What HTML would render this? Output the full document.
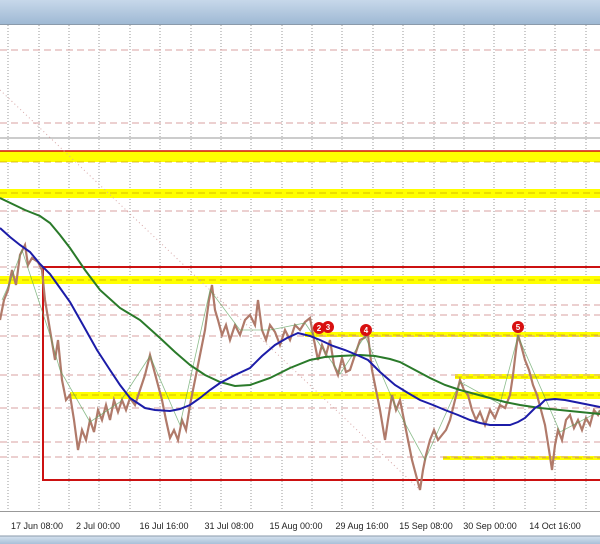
<!DOCTYPE html>
<html><head><style>
html,body{margin:0;padding:0;width:600px;height:544px;overflow:hidden;background:#fff;font-family:"Liberation Sans",sans-serif}
</style></head><body>
<svg width="600" height="544" xmlns="http://www.w3.org/2000/svg">
<defs>
<linearGradient id="tb" x1="0" y1="0" x2="0" y2="1"><stop offset="0" stop-color="#c7d8ea"/><stop offset="1" stop-color="#9fb9d4"/></linearGradient>
<linearGradient id="bb" x1="0" y1="0" x2="0" y2="1"><stop offset="0" stop-color="#d7e3ef"/><stop offset="1" stop-color="#a8c0d8"/></linearGradient>
</defs>
<rect x="0" y="0" width="600" height="24" fill="url(#tb)"/>
<line x1="0" y1="24.5" x2="600" y2="24.5" stroke="#8a9aab"/>
<g stroke="#9a9a9a" stroke-dasharray="1,2" stroke-width="1">
<line x1="8" y1="25" x2="8" y2="512"/><line x1="39" y1="25" x2="39" y2="512"/><line x1="69" y1="25" x2="69" y2="512"/><line x1="99" y1="25" x2="99" y2="512"/><line x1="130" y1="25" x2="130" y2="512"/><line x1="160" y1="25" x2="160" y2="512"/><line x1="191" y1="25" x2="191" y2="512"/><line x1="221" y1="25" x2="221" y2="512"/><line x1="251" y1="25" x2="251" y2="512"/><line x1="282" y1="25" x2="282" y2="512"/><line x1="312" y1="25" x2="312" y2="512"/><line x1="342" y1="25" x2="342" y2="512"/><line x1="373" y1="25" x2="373" y2="512"/><line x1="403" y1="25" x2="403" y2="512"/><line x1="434" y1="25" x2="434" y2="512"/><line x1="464" y1="25" x2="464" y2="512"/><line x1="494" y1="25" x2="494" y2="512"/><line x1="525" y1="25" x2="525" y2="512"/><line x1="555" y1="25" x2="555" y2="512"/><line x1="586" y1="25" x2="586" y2="512"/>
</g>
<g fill="#ffff00">
<rect x="0" y="151" width="600" height="11"/>
<rect x="0" y="189" width="600" height="9"/>
<rect x="0" y="276" width="600" height="8"/>
<rect x="305" y="332" width="295" height="5"/>
<rect x="455" y="374" width="145" height="5"/>
<rect x="70" y="392" width="530" height="7"/>
<rect x="443" y="456" width="157" height="4"/>
</g>
<g stroke="#d9a0a0" stroke-dasharray="7,4" stroke-width="1">
<line x1="0" y1="50" x2="600" y2="50"/><line x1="0" y1="123" x2="600" y2="123"/><line x1="0" y1="211" x2="600" y2="211"/><line x1="0" y1="267" x2="600" y2="267"/>
<line x1="0" y1="305" x2="600" y2="305"/><line x1="0" y1="315" x2="600" y2="315"/><line x1="0" y1="336" x2="600" y2="336"/><line x1="0" y1="375" x2="600" y2="375"/><line x1="0" y1="408" x2="600" y2="408"/><line x1="0" y1="442" x2="600" y2="442"/><line x1="0" y1="457" x2="600" y2="457"/>
</g>
<g stroke="#c8a000" stroke-dasharray="7,4" stroke-width="1" opacity="0.7">
<line x1="0" y1="162" x2="600" y2="162"/><line x1="0" y1="193" x2="600" y2="193"/><line x1="0" y1="280" x2="600" y2="280"/><line x1="305" y1="335" x2="600" y2="335"/><line x1="455" y1="377" x2="600" y2="377"/><line x1="70" y1="395" x2="600" y2="395"/><line x1="443" y1="458" x2="600" y2="458"/>
</g>
<line x1="0" y1="138" x2="600" y2="138" stroke="#999" stroke-width="1"/>
<line x1="0" y1="151" x2="600" y2="151" stroke="#d01010" stroke-width="1.5"/>
<line x1="0" y1="511.5" x2="600" y2="511.5" stroke="#999"/>
<line x1="0" y1="90" x2="420" y2="490" stroke="#d8a8a8" stroke-dasharray="1,3"/>
<rect x="43" y="267" width="570" height="213" fill="none" stroke="#cc1111" stroke-width="2"/>
<polyline fill="none" stroke="#b07a6a" stroke-width="2.2" points="0,320 4,300 8,290 12,270 16,285 20,255 25,245 28,265 32,258 38,262 42,270 45,300 50,330 55,360 58,340 62,380 66,400 70,395 74,420 78,450 82,430 86,440 90,420 94,432 98,410 102,420 106,405 110,420 114,400 118,412 122,400 126,410 130,398 135,405 140,390 145,375 150,355 154,370 158,385 162,400 166,420 170,438 174,430 178,440 182,420 186,430 190,405 195,380 200,355 205,330 209,300 212,285 215,310 218,320 222,335 226,325 230,340 235,325 240,335 245,320 250,315 255,325 258,300 262,330 266,340 270,325 275,332 280,345 285,330 290,340 295,325 300,330 305,322 310,318 314,340 318,360 322,345 326,355 330,340 334,365 338,375 342,358 346,372 350,370 355,355 360,340 364,338 368,335 372,370 376,390 380,410 385,440 388,420 392,395 396,410 400,400 404,420 408,440 412,460 416,475 420,490 423,470 426,455 430,440 434,430 438,440 442,435 446,430 450,420 455,400 460,380 464,390 468,395 472,410 476,420 480,412 485,425 490,410 495,418 500,405 505,408 510,395 513,375 516,350 518,335 521,345 525,360 529,370 533,385 537,395 541,410 545,425 549,450 552,470 555,445 558,430 562,440 566,420 570,415 574,428 578,420 582,430 586,418 590,425 594,410 598,415 600,410"/>
<polyline fill="none" stroke="#5aa05a" stroke-width="0.8" opacity="0.7" points="2,300 10,282 22,250 50,335 60,370 90,422 120,402 150,356 180,425 210,290 240,330 270,330 305,323 340,374 365,336 395,405 425,460 460,382 500,404 518,336 560,432 600,411"/>
<polyline fill="none" stroke="#2a7a2a" stroke-width="2" points="0,198 25,210 40,216 50,223 60,235 70,248 85,270 100,290 120,308 140,320 160,338 175,352 190,365 205,375 220,382 235,386 250,385 270,378 290,368 310,360 325,357 340,356 360,355 375,356 390,359 400,362 415,370 430,378 445,385 460,390 475,394 490,398 505,402 520,405 540,408 560,410 580,412 600,414"/>
<polyline fill="none" stroke="#1c1ca8" stroke-width="2" points="0,228 10,237 20,245 30,252 40,264 50,274 60,288 70,302 83,325 97,350 110,370 120,385 130,398 145,408 155,410 170,411 180,409 190,405 200,398 210,390 220,383 235,375 250,368 262,356 275,345 287,338 298,333 310,336 320,340 333,346 345,350 357,355 368,360 380,372 395,385 408,393 420,400 433,405 445,410 458,415 470,420 480,423 490,425 500,425 510,425 518,422 525,418 530,413 535,408 540,405 545,400 555,399 565,400 580,403 600,407"/>
<g font-size="8" font-weight="bold" fill="#fff" text-anchor="middle">
<circle cx="319" cy="328" r="6" fill="#d81010"/><text x="319" y="331">2</text>
<circle cx="328" cy="327" r="6" fill="#d81010"/><text x="328" y="330">3</text>
<circle cx="366" cy="330" r="6" fill="#d81010"/><text x="366" y="333">4</text>
<circle cx="518" cy="327" r="6" fill="#d81010"/><text x="518" y="330">5</text>
</g>
<g font-size="9" fill="#222" text-anchor="middle">
<text x="37" y="529">17 Jun 08:00</text><text x="98" y="529">2 Jul 00:00</text><text x="164" y="529">16 Jul 16:00</text><text x="229" y="529">31 Jul 08:00</text><text x="296" y="529">15 Aug 00:00</text><text x="362" y="529">29 Aug 16:00</text><text x="426" y="529">15 Sep 08:00</text><text x="490" y="529">30 Sep 00:00</text><text x="555" y="529">14 Oct 16:00</text>
</g>
<rect x="0" y="536" width="600" height="8" fill="url(#bb)"/>
<line x1="0" y1="536" x2="600" y2="536" stroke="#8a9aab"/>
</svg>
</body></html>
